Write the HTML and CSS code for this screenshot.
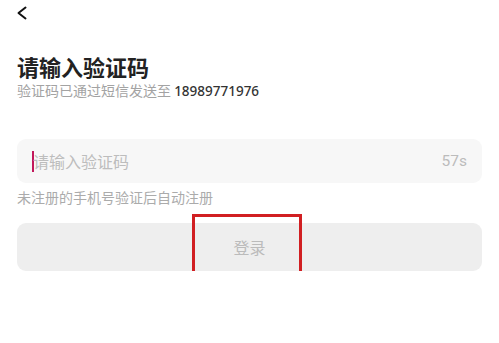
FILE: index.html
```html
<!DOCTYPE html>
<html lang="zh-CN">
<head>
<meta charset="utf-8">
<title>请输入验证码</title>
<link rel="stylesheet" href="styles.css">
</head>
<body>
<div class="page">
  <div class="topbar">
    <svg class="back" width="12" height="16" viewBox="0 0 12 16"><polyline points="9.5,2.5 2.5,8 9.5,13.5" fill="none" stroke="#111" stroke-width="2" stroke-linecap="round" stroke-linejoin="round"/></svg>
  </div>
  <h1 class="title">请输入验证码</h1>
  <p class="sub">验证码已通过短信发送至 <span class="phone">18989771976</span></p>
  <div class="field">
    <span class="caret"></span>
    <span class="placeholder">请输入验证码</span>
    <span class="timer">57s</span>
  </div>
  <p class="hint">未注册的手机号验证后自动注册</p>
  <div class="btn-wrap">
    <div class="btn">登录</div>
    <div class="mark"></div>
  </div>
</div>
</body>
</html>
```
FILE: styles.css
```css
html, body {
  margin: 0;
  padding: 0;
  background: #fff;
}
body {
  font-family: "Noto Sans", "Noto Sans CJK SC", sans-serif;
}
.page {
  padding: 0 17px;
}
.topbar {
  height: 25px;
  display: flex;
  align-items: center;
}
.back {
  display: block;
  margin-left: -1px;
}
.title {
  margin: 27px 0 0;
  font-size: 22px;
  line-height: 28px;
  font-weight: 700;
  color: #222;
  font-family: "Noto Sans CJK SC", sans-serif;
}
.sub {
  margin: 0;
  font-size: 14px;
  line-height: 20px;
  color: #a3a3a3;
  font-family: "Noto Sans CJK SC", sans-serif;
}
.phone {
  color: #333;
  font-size: 13.5px;
  font-family: "Noto Sans", "Noto Sans CJK SC", sans-serif;
  font-weight: 500;
}
.field {
  margin-top: 38px;
  height: 44px;
  background: #f7f7f7;
  border-radius: 9px;
  display: flex;
  align-items: center;
  padding: 0 15px 0 15px;
}
.caret {
  width: 2px;
  height: 21px;
  background: #c2185b;
  margin-right: -1px;
}
.placeholder {
  flex: 1;
  font-size: 16px;
  color: #bdbdbd;
  font-family: "Noto Sans CJK SC", sans-serif;
}
.timer {
  font-size: 15.5px;
  color: #bcbcbc;
  font-family: Roboto, "Noto Sans", sans-serif;
}
.hint {
  margin: 4px 0 0;
  font-size: 14px;
  line-height: 20px;
  color: #ababab;
  font-family: "Noto Sans CJK SC", sans-serif;
}
.btn-wrap {
  position: relative;
  margin-top: 16px;
}
.btn {
  height: 48px;
  border-radius: 9px;
  background: #eeeeee;
  display: flex;
  align-items: center;
  justify-content: center;
  font-size: 16px;
  color: #bbbbbb;
  font-family: "Noto Sans CJK SC", sans-serif;
}
.mark {
  position: absolute;
  left: 175px;
  top: -9px;
  width: 110px;
  height: 62px;
  box-sizing: border-box;
  border: 3px solid #d11f22;
}
```
